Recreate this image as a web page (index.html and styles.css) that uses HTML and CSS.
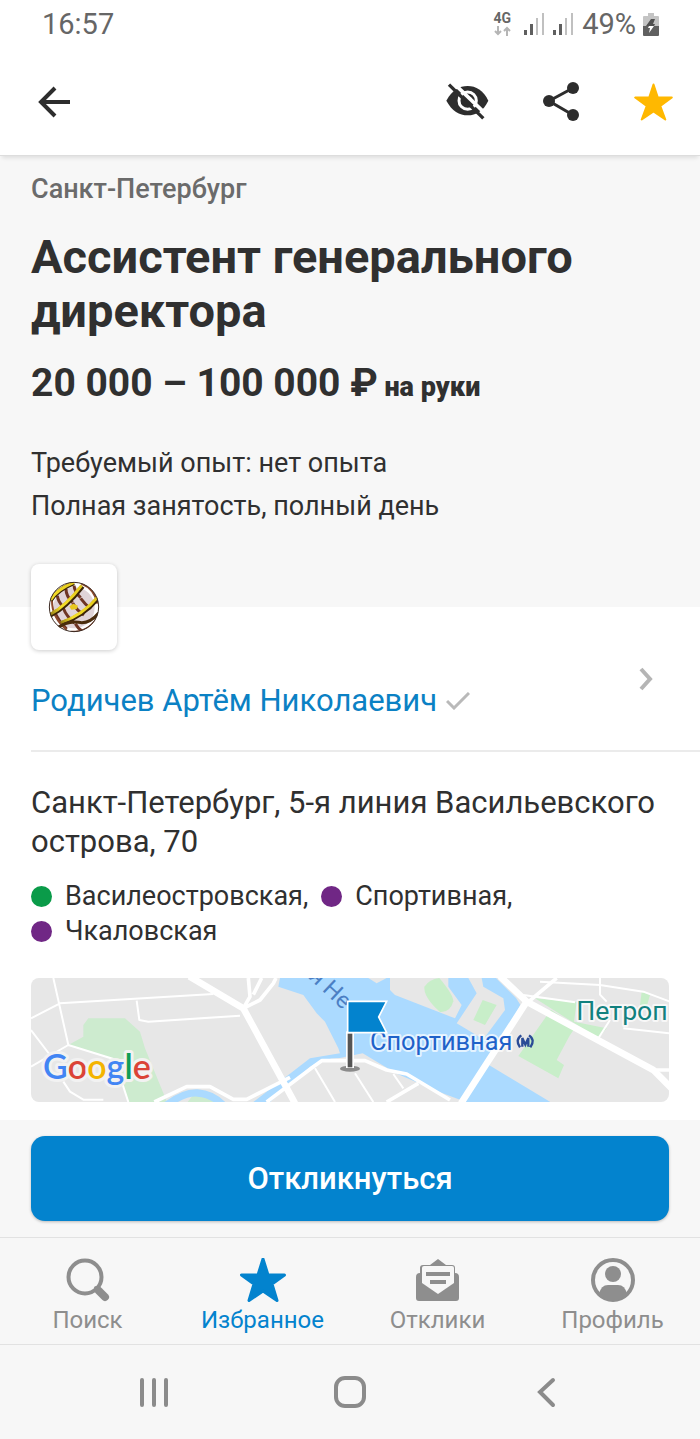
FILE: index.html
```html
<!DOCTYPE html>
<html lang="ru">

<head>
    <meta charset="UTF-8">
    <meta name="viewport" content="width=device-width, initial-scale=1.0">
    <title>Ассистент генерального директора</title>
    <link rel="stylesheet" href="styles.css">
</head>

<body>

    <div class="status-bar">
        <span>16:57</span>
        <div class="status-icons">
            <div class="network">
                <span>4G</span>
                <svg width="17" height="10" viewBox="0 0 17 10" fill="none" stroke="#b5b5b5" stroke-width="2">
                    <path d="M4 0v8M1 5l3 3 3-3M13 10V2M10 5l3-3 3 3" />
                </svg>
            </div>
            <svg width="20" height="22" viewBox="0 0 20 22">
                <path d="M0 17h3v5H0zM6 11h3v11H6z" fill="#5f5f5f" />
                <path d="M12 5h2v17h-2zM18 0h2v22h-2z" fill="#c0c0c0" />
            </svg>
            <svg width="20" height="22" viewBox="0 0 20 22">
                <path d="M0 17h3v5H0zM6 11h3v11H6z" fill="#5f5f5f" />
                <path d="M12 5h2v17h-2zM18 0h2v22h-2z" fill="#c0c0c0" />
            </svg>
            <span class="battery-level">49%</span>
            <svg width="16" height="23" viewBox="0 0 16 23">
                <path d="M5 0h6v3h4q1 0 1 1v9H0V4q0-1 1-1h4z" fill="#c4c4c4" />
                <path d="M0 13h16v9q0 1-1 1H1q-1 0-1-1z" fill="#606060" />
                <path d="M8 6h4l-2 5h2l-1 2H3z" fill="#505050" />
                <path d="M6 13h5l-5 7 1-5H5z" fill="#fff" />
            </svg>
        </div>
    </div>

    <header class="app-bar">
        <button class="icon-button" aria-label="Назад">
            <svg width="32" height="32" viewBox="0 0 32 32" fill="none" stroke="#2d2d2d" stroke-width="4">
                <path d="M32 16H3M17 2L3 16l14 14" />
            </svg>
        </button>
        <div class="app-actions">
            <button class="icon-button" aria-label="Скрыть">
                <svg width="43" height="37" viewBox="0 0 129 111">
                    <path d="M1 53C18 22 40 9 65 9s47 13 62 44C112 84 90 97 65 97S18 84 1 53z" fill="#2d2d2d" />
                    <circle cx="65" cy="53" r="26" fill="none" stroke="#fff" stroke-width="9" />
                    <path d="M65 42q10 0 13 10" fill="none" stroke="#fff" stroke-width="4" />
                    <path d="M18 -4L127 100" stroke="#fff" stroke-width="11" />
                    <path d="M9 5L112 106" stroke="#2d2d2d" stroke-width="10" />
                </svg>
            </button>
            <button class="icon-button" aria-label="Поделиться">
                <svg width="36" height="39" viewBox="0 0 36 39" fill="#2d2d2d">
                    <path d="M30 6L6 19l24 14" fill="none" stroke="#2d2d2d" stroke-width="3" />
                    <circle cx="30" cy="6" r="6" />
                    <circle cx="6" cy="19" r="6" />
                    <circle cx="30" cy="33" r="6" />
                </svg>
            </button>
            <button class="icon-button" aria-label="В избранном">
                <svg width="39" height="38" viewBox="0 0 39 38" fill="#ffb800" stroke="#ffb800" stroke-width="2" stroke-linejoin="round">
                    <path d="M19.500 1.500l4.300 13h14l-11.500 8.500 5 13.500-11.800-8-11.800 8 5-13.500L1.200 14.500h14z" />
                </svg>
            </button>
        </div>
    </header>

    <main>
        <section class="vacancy">
            <p class="city">Санкт-Петербург</p>
            <h1>Ассистент генерального директора</h1>
            <p class="salary">20 000 – 100 000 ₽<small> на руки</small></p>
            <p class="terms">Требуемый опыт: нет опыта<br>Полная занятость, полный день</p>
        </section>

        <section class="employer">
            <div class="employer-logo">
                <svg width="52" height="52" viewBox="0 0 156 156">
                    <defs>
                        <clipPath id="ball">
                            <circle cx="78" cy="78" r="75" />
                        </clipPath>
                        <linearGradient id="gold" x1="0" y1="1" x2="1" y2="0">
                            <stop offset="0" stop-color="#5a4208" />
                            <stop offset="0.300" stop-color="#f5df2a" />
                            <stop offset="0.800" stop-color="#e3c81c" />
                            <stop offset="1" stop-color="#6d5208" />
                        </linearGradient>
                    </defs>
                    <circle cx="78" cy="80" r="62" fill="#e0d4d8" />
                    <g clip-path="url(#ball)" fill="none">
                        <!-- back ribs -->
                        <path d="M28 44q2 18 18 34M54 24q0 22 20 40M78 14q2 20 20 36M20 92q10 26 36 52M46 82q10 26 34 44M74 66q12 22 34 36M98 52q12 16 30 32M82 128q8 14 20 22" stroke="#6e3524" stroke-width="9" />
                        <path d="M12 60q0 50 44 86M100 8q40 16 48 60" stroke="#8d4a2e" stroke-width="6" />
                        <path d="M64 76l12-8 14 6-4 10-16 2z" fill="#e8c820" />
                        <!-- front bands -->
                        <path d="M6 104Q56 78 104 16M40 128Q108 104 150 52M8 58Q28 26 78 6" stroke="#3b2508" stroke-width="13" />
                        <path d="M5 101Q54 75 101 13M38 125Q106 101 148 49M8 56Q28 24 78 4" stroke="url(#gold)" stroke-width="9" />
                        <path d="M26 142Q60 118 92 124T152 96" stroke="#4a2c0c" stroke-width="9" />
                        <path d="M70 152q50 0 76-40" stroke="#8d4a2e" stroke-width="5" />
                    </g>
                    <circle cx="78" cy="78" r="74" fill="none" stroke="#3b2a22" stroke-width="3" />
                </svg>
            </div>
            <a class="employer-link" href="#">
                <span class="employer-name">Родичев Артём Николаевич
                    <svg width="24" height="18" viewBox="0 0 24 18" fill="none" stroke="#b9b9b9" stroke-width="3">
                        <path d="M1 9l7 7L23 1" />
                    </svg>
                </span>
                <svg class="chevron" width="14" height="24" viewBox="0 0 14 24" fill="none" stroke="#b5b5b5" stroke-width="4">
                    <path d="M2 2l9 10-9 10" />
                </svg>
            </a>
        </section>

        <section class="address">
            <p class="street">Санкт-Петербург, 5-я линия Васильевского острова, 70</p>
            <ul class="metro">
                <li class="station green">Василеостровская,</li>
                <li class="station purple">Спортивная,</li>
                <li class="station purple">Чкаловская</li>
            </ul>

            <svg class="map" viewBox="0 0 1914 372" preserveAspectRatio="xMidYMid slice" role="img" aria-label="Карта">
                <rect width="1914" height="372" fill="#e7e7e7" />
                <!-- parks -->
                <g fill="#cdebcf">
                    <path d="M157 141l15-20h110l45 40 15 50 66 161H292l-25-66-10-60-145-45 45-25z" />
                    <path d="M470 372l20-26q50-6 90 26z" />
                </g>
                <!-- water -->
                <g fill="#abdaff">
                    <path d="M747 0L742 26l75 25 40 55 25 25 40 80 5 15-90 15-170 131h50l120-106q40-26 90-26l68-14 100 60 120 52 90 34h253l-183-110 93-182-13-20-60-60z" />
                </g>
                <path d="M395 390q60-48 105-45t80 40" fill="none" stroke="#abdaff" stroke-width="22" />
                <!-- islands -->
                <g fill="#e7e7e7">
                    <path d="M1077 0v36l15 15 180 70 20-40-40-55V0z" />
                    <path d="M1312 0l25 46-60 90 80 48 65-88-5-35-60-35-5-26z" />
                    <path d="M1012 0h55l-30 16z" />
                </g>
                <g fill="#c8eec9">
                    <path d="M1180 26q15-22 45-26 42 50 42 70-10 35-40 32-50-45-47-76z" />
                    <path d="M1355 66l42 15-35 60-35-15z" />
                    <path d="M1512 61l125 12-8 58 98 20-25 30z" />
                    <path d="M1560 95l75 50-20 30-38 71 22 15-17 40-120-67z" />
                    <path d="M1832 41l25 10-10 35-20-5z" />
                </g>
                <!-- streets -->
                <g fill="none" stroke="#fff" stroke-width="6" stroke-linejoin="round">
                    <path d="M67 0l45 201M0 121l87-45 460-28M317 68l8 58 27 5 275-18M0 156l57 75M0 266l112-65 145 45M97 311l20 30 40 24h60M275 320l17 52" />
                    <path d="M852 271l60 101M972 286l55 86M1087 288l30 43" />
                    <path d="M1477 51l155 22M1527 11l180 10 130 20 80 30M1707 0v50l20 21M1702 181l35-55M1777 151l137 15" />
                </g>
                <g fill="none" stroke="#fff" stroke-width="11" stroke-linejoin="round">
                    <path d="M370 372l97-46h70l70 38h40l130-66M652 0l5 56-20 35M735 0l-8 16-40 50-50 25M692 0l-25 50" />
                    <path d="M707 372l140-106 25-18h130l65 28 60 12 130 78M1162 316l-95 56M1487 76l90-76M1857 276h57" />
                </g>
                <g fill="none" stroke="#fff" stroke-width="20" stroke-linejoin="round">
                    <path d="M475-5l162 96 155 285M1290 376l197-305-80-76M1487 71l380 205 60 60" />
                </g>
                <!-- labels -->
                <text class="river" transform="translate(831 -1) rotate(43)">я Не</text>
                <text class="place metro-place" x="1017" y="216">Спортивная</text>
                <text class="place park-place" x="1636" y="127">Петроп</text>
                <g fill="none" stroke="#2a4c96" stroke-width="7">
                    <path d="M1467 208q-16-22 4-36M1498 208q16-22-4-36M1474 206v-26l9 20 9-20v26" />
                </g>
                <!-- flag -->
                <ellipse cx="957" cy="272" rx="30" ry="9" fill="#8b8b8b" />
                <path d="M957 160v110" stroke="#fff" stroke-width="24" />
                <path d="M957 166v102" stroke="#555" stroke-width="14" />
                <path d="M950 70h117l-24 47 24 47H950z" fill="#0383ce" stroke="#fff" stroke-width="5" />
                <text class="google" x="36" y="303"><tspan fill="#4285f4">G</tspan><tspan fill="#db4437">o</tspan><tspan fill="#f4b400">o</tspan><tspan fill="#4285f4">g</tspan><tspan fill="#0f9d58">l</tspan><tspan fill="#db4437">e</tspan></text>
            </svg>
        </section>
    </main>

    <div class="apply">
        <button class="apply-button">Откликнуться</button>
    </div>

    <nav class="tabs">
        <a class="tab" href="#">
            <svg width="44" height="44" viewBox="0 0 44 44" fill="none" stroke="#8e8e8e" stroke-linecap="round">
                <circle cx="19" cy="19" r="16.500" stroke-width="4" />
                <path d="M31 31l-1-1" stroke-width="4" />
                <path d="M33 33l6 6" stroke-width="8" />
            </svg>
            <span>Поиск</span>
        </a>
        <a class="tab active" href="#">
            <svg width="48" height="44" viewBox="0 0 48 44" fill="#0383ce" stroke="#0383ce" stroke-width="3" stroke-linejoin="round">
                <path d="M24 1l5 16h16.500L33 26l5 16.500L24 33 10 42.500 15 26 2.500 17H19z" />
            </svg>
            <span>Избранное</span>
        </a>
        <a class="tab" href="#">
            <svg width="44" height="44" viewBox="0 0 44 44" fill="#8e8e8e">
                <path d="M14 7l8-6 8 6h6q3 0 3 3v5q4 0 4 4v21q0 3-3 3H3q-3 0-3-3V19q0-4 4-4v-5q0-3 3-3z" />
                <path d="M8 8h28q2 0 2 2v15L22 36 6 25V10q0-2 2-2z" fill="#f7f7f7" />
                <path d="M10 14h24v4H10zM14 22h16v4H14z" />
            </svg>
            <span>Отклики</span>
        </a>
        <a class="tab" href="#">
            <svg width="44" height="44" viewBox="0 0 44 44" fill="#8e8e8e">
                <circle cx="22" cy="22" r="20" fill="none" stroke="#8e8e8e" stroke-width="4" />
                <circle cx="22" cy="16" r="8" />
                <path d="M8 36q2-9 9-9h10q7 0 9 9-6 7-14 7T8 36z" />
            </svg>
            <span>Профиль</span>
        </a>
    </nav>

    <div class="system-nav">
        <button class="system-button" aria-label="Недавние">
            <svg width="32" height="32" viewBox="0 0 32 32" stroke="#8b8b8b" stroke-width="4" stroke-linecap="round">
                <path d="M4 4v25M16 4v25M28 4v25" />
            </svg>
        </button>
        <button class="system-button" aria-label="Домой">
            <svg width="32" height="32" viewBox="0 0 32 32" fill="none" stroke="#8b8b8b" stroke-width="4">
                <rect x="2" y="2" width="28" height="28" rx="9" />
            </svg>
        </button>
        <button class="system-button" aria-label="Назад">
            <svg width="32" height="32" viewBox="0 0 32 32" fill="none" stroke="#8b8b8b" stroke-width="4" stroke-linecap="round">
                <path d="M23 4L10 16l13 13" />
            </svg>
        </button>
    </div>

</body>

</html>
```

FILE: styles.css
```css
/* Basic styling */
* {
    box-sizing: border-box;
}

body {
    font-family: Roboto, sans-serif;
    background-color: #fff;
    color: #303030;
    margin: 0;
    min-height: 100vh;
    display: flex;
    flex-direction: column;
}

h1,
p,
ul {
    margin: 0;
    padding: 0;
}

svg {
    display: block;
    flex-shrink: 0;
}

button {
    font-family: inherit;
    border: none;
    padding: 0;
    background: none;
    cursor: pointer;
}

a {
    color: inherit;
    text-decoration: none;
}

/* Status bar */
.status-bar {
    display: flex;
    align-items: center;
    justify-content: space-between;
    height: 48px;
    padding: 0 41px 0 42px;
    font-size: 29px;
    color: #666;
}

.status-icons {
    display: flex;
    align-items: center;
    gap: 9px;
}

.network {
    display: flex;
    flex-direction: column;
    align-items: center;
    gap: 2px;
    margin-right: 4px;
    font-size: 14px;
    font-weight: 700;
    line-height: 12px;
}

.battery-level {
    margin-right: -2px;
}

/* App bar */
.app-bar {
    display: flex;
    justify-content: space-between;
    height: 108px;
    padding-left: 7px;
    background-color: #fff;
    border-bottom: 1px solid #ddd;
    box-shadow: 0 4px 4px -2px rgba(0, 0, 0, 0.1);
    z-index: 1;
}

.app-actions {
    display: flex;
}

.icon-button {
    display: flex;
    align-items: center;
    justify-content: center;
    width: 93px;
}

/* Vacancy */
main {
    flex: 1;
}

.vacancy {
    padding: 16px 31px 79px;
    background-color: #f7f7f7;
}

.city {
    font-size: 27px;
    font-weight: 500;
    line-height: 34px;
    color: #6b6b6b;
}

h1 {
    margin-top: 24px;
    font-size: 47px;
    font-weight: 700;
    line-height: 54px;
}

.salary {
    margin-top: 22px;
    font-size: 39px;
    font-weight: 700;
    line-height: 46px;
}

.salary small {
    font-size: 27px;
    font-weight: 900;
}

.terms {
    margin-top: 32px;
    font-size: 27px;
    line-height: 43px;
}

/* Employer */
.employer {
    margin-left: 31px;
    border-bottom: 2px solid #ebebeb;
}

.employer-logo {
    display: flex;
    align-items: center;
    justify-content: center;
    width: 86px;
    height: 86px;
    margin-top: -43px;
    border-radius: 8px;
    background-color: #fff;
    box-shadow: 0 1px 4px rgba(0, 0, 0, 0.2);
}

.employer-link {
    display: flex;
    justify-content: space-between;
    padding: 16px 47px 30px 0;
}

.employer-name {
    display: flex;
    align-items: center;
    gap: 9px;
    padding-top: 16px;
    font-size: 31px;
    line-height: 38px;
    color: #0b81c4;
}

.chevron {
    margin-top: 1px;
}

/* Address */
.address {
    padding: 31px 31px 18px;
}

.street {
    font-size: 31px;
    line-height: 39px;
}

.metro {
    display: flex;
    flex-wrap: wrap;
    column-gap: 13px;
    margin: 18px 90px 29px 0;
    font-size: 27px;
    line-height: 35px;
    list-style: none;
}

.station {
    display: flex;
    align-items: center;
    gap: 13px;
}

.station::before {
    content: "";
    width: 21px;
    height: 21px;
    border-radius: 50%;
}

.green::before {
    background-color: #0a9b49;
}

.purple::before {
    background-color: #702785;
}

.map {
    width: 100%;
    height: 124px;
    border-radius: 8px;
}

.river {
    font-size: 70px;
    fill: #4b7fc4;
}

.place {
    font-size: 76px;
    stroke: #fff;
    stroke-width: 12px;
    stroke-linejoin: round;
    stroke-opacity: 0.7;
    paint-order: stroke;
}

.metro-place {
    fill: #1f62c9;
}

.park-place {
    font-size: 80px;
    fill: #12817f;
}

.google {
    font-family: Lato, sans-serif;
    font-size: 102px;
    font-weight: 600;
    stroke: #f2f2f2;
    stroke-width: 18px;
    stroke-linejoin: round;
    paint-order: stroke;
}

/* Apply button */
.apply {
    padding: 16px 31px;
    background-color: #f7f7f7;
}

.apply-button {
    width: 100%;
    height: 85px;
    border-radius: 14px;
    background-color: #0383ce;
    color: #fff;
    font-size: 31px;
    font-weight: 500;
    box-shadow: 0 1px 3px rgba(0, 0, 0, 0.25);
}

/* Bottom tabs */
.tabs {
    display: flex;
    border-top: 1px solid #e2e2e2;
    border-bottom: 1px solid #e2e2e2;
    background-color: #f7f7f7;
}

.tab {
    flex: 1;
    display: flex;
    flex-direction: column;
    align-items: center;
    gap: 3px;
    padding: 20px 0 9px;
    font-size: 24px;
    line-height: 30px;
    color: #8e8e8e;
}

.active {
    color: #0383ce;
}

/* System navigation */
.system-nav {
    display: flex;
    height: 94px;
    padding: 0 8%;
    background-color: #f7f7f7;
}

.system-button {
    flex: 1;
    display: flex;
    align-items: center;
    justify-content: center;
}
```
